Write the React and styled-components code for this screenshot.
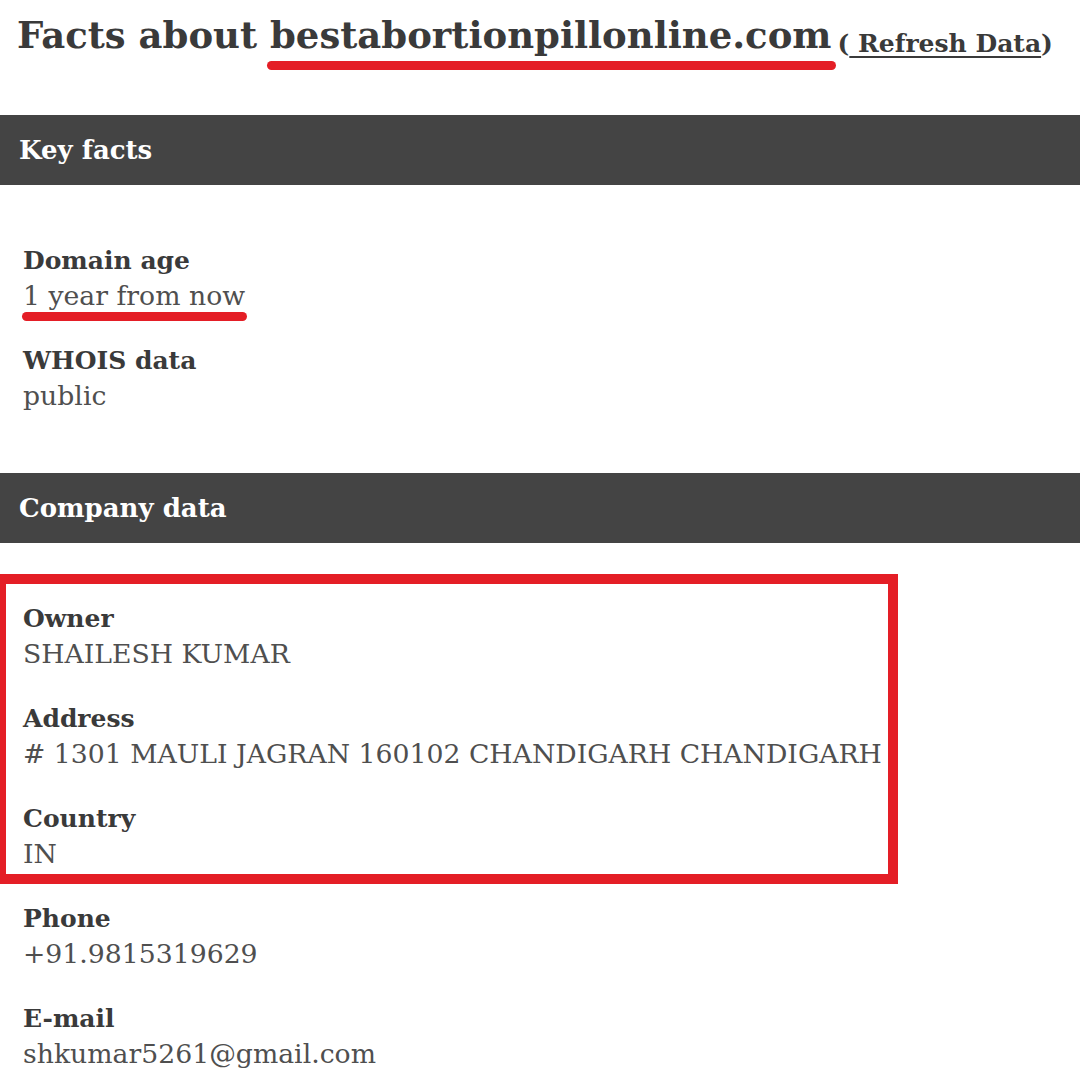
import React from "react";
import styled, { createGlobalStyle } from "styled-components";

const Global = createGlobalStyle`
  html, body { margin: 0; padding: 0; background: #ffffff; }
  body { font-family: "DejaVu Serif", "Liberation Serif", serif; color: #3a3a3a; }
  *, *::before, *::after { box-sizing: border-box; }
`;

const RED = "#e41e26";

const Page = styled.div`
  width: 1080px;
  min-height: 1087px;
  overflow: hidden;
  background: #fff;
`;

const TitleRow = styled.header`
  height: 115px;
  display: flex;
  align-items: flex-start;
  padding-left: 17px;
  gap: 6px;
`;

const Title = styled.h1`
  margin: 13px 0 0;
  font-size: 37px;
  line-height: 44px;
  font-weight: 700;
  color: #3a3a3a;
  white-space: nowrap;
`;

const Marked = styled.span`
  position: relative;
  &::after {
    content: "";
    position: absolute;
    left: ${(p) => p.$left}px;
    right: ${(p) => p.$right}px;
    top: calc(100% + ${(p) => p.$gap}px);
    height: ${(p) => p.$thick}px;
    border-radius: ${(p) => p.$thick / 2}px;
    background: ${RED};
  }
`;

const Refresh = styled.a`
  margin-top: 29px;
  font-size: 25px;
  line-height: 30px;
  font-weight: 700;
  color: #3a3a3a;
  white-space: nowrap;
  text-decoration: none;
  span {
    text-decoration: underline;
    text-decoration-thickness: 2px;
    text-underline-offset: 4px;
  }
`;

const SectionBar = styled.h2`
  margin: 0;
  height: 70px;
  display: flex;
  align-items: center;
  padding-left: 19px;
  background: #444444;
  color: #ffffff;
  font-size: 26px;
  font-weight: 700;
`;

const FactList = styled.dl`
  margin: 0;
  display: flex;
  flex-direction: column;
  gap: 30px;
  padding: 58px 0 ${(p) => p.$bottom}px 23px;
`;

const Group = styled.div`
  position: relative;
  display: flex;
  flex-direction: column;
  gap: 30px;
  &::before {
    content: "";
    position: absolute;
    left: -27px;
    top: -27px;
    bottom: -13px;
    width: 902px;
    border: 10px solid ${RED};
    pointer-events: none;
  }
`;

const Fact = styled.div`
  display: flex;
  flex-direction: column;
`;

const Label = styled.dt`
  font-size: 25px;
  line-height: 35px;
  font-weight: 700;
  color: #3a3a3a;
`;

const Value = styled.dd`
  margin: 0;
  font-size: 26.7px;
  line-height: 35px;
  font-weight: 400;
  color: #4f4f4f;
  white-space: nowrap;
`;

const FactItem = ({ label, children }) => (
  <Fact>
    <Label>{label}</Label>
    <Value>{children}</Value>
  </Fact>
);

export default function App() {
  return (
    <>
      <Global />
      <Page>
        <TitleRow>
          <Title>
            Facts about{" "}
            <Marked $left={-3} $right={-5} $gap={4} $thick={9}>
              bestabortionpillonline.com
            </Marked>
          </Title>
          <Refresh href="#">
            (<span> Refresh Data</span>)
          </Refresh>
        </TitleRow>

        <SectionBar>Key facts</SectionBar>
        <FactList $bottom={60}>
          <FactItem label="Domain age">
            <Marked $left={-1} $right={-2} $gap={1} $thick={9}>
              1 year from now
            </Marked>
          </FactItem>
          <FactItem label="WHOIS data">public</FactItem>
        </FactList>

        <SectionBar>Company data</SectionBar>
        <FactList $bottom={0}>
          <Group>
            <FactItem label="Owner">SHAILESH KUMAR</FactItem>
            <FactItem label="Address">
              # 1301 MAULI JAGRAN 160102 CHANDIGARH CHANDIGARH
            </FactItem>
            <FactItem label="Country">IN</FactItem>
          </Group>
          <FactItem label="Phone">+91.9815319629</FactItem>
          <FactItem label="E-mail">shkumar5261@gmail.com</FactItem>
        </FactList>
      </Page>
    </>
  );
}
